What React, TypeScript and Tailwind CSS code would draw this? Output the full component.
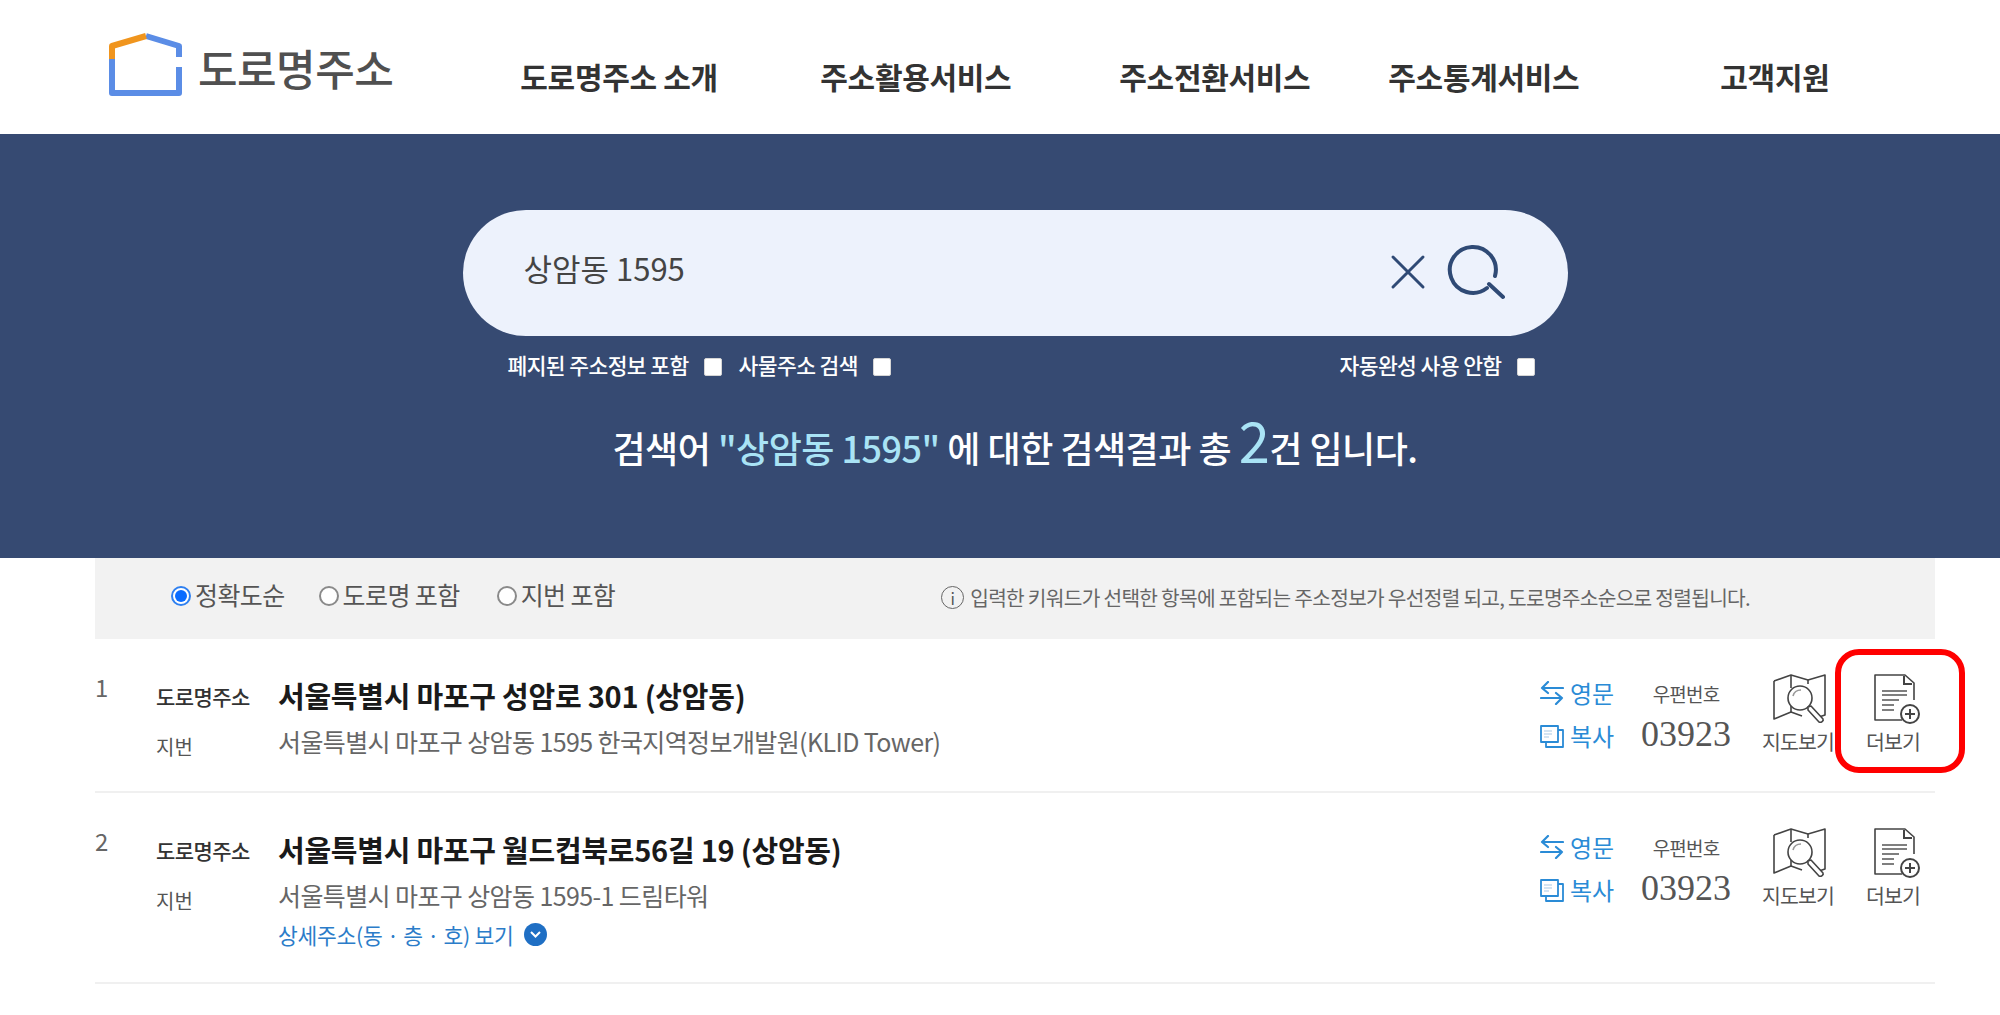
import React from 'react';

function Logo() {
  return (
    <svg width="76" height="64" viewBox="0 0 76 64" fill="none" className="shrink-0">
      <path d="M5 26V60H72V34" stroke="#5b8de6" strokeWidth="6" strokeLinejoin="round" />
      <path d="M39 3L72 13V24" stroke="#5b8de6" strokeWidth="6" strokeLinejoin="round" />
      <path d="M5 26V13L39 3" stroke="#f0951e" strokeWidth="6" strokeLinejoin="round" />
    </svg>
  );
}

function MapIcon() {
  return (
    <svg width="56" height="50" viewBox="0 0 56 50" fill="none" stroke="#444" strokeWidth="1.6" strokeLinejoin="round" className="ml-[3px]">
      <path d="M2 7L19 1L36 6L53 1V41L47 43" />
      <path d="M30 42L19 38L2 45V7" />
      <path d="M19 1V14M19 29V38M36 6V10" />
      <circle cx="28" cy="24" r="12" fill="#fff" />
      <path d="M21 22C22 18 25 16 29 16" stroke="#999" />
      <path d="M36 33L39 32L51 45C52 47 49 49 47 48L36 36Z" fill="#fff" />
    </svg>
  );
}

function DocIcon() {
  return (
    <svg width="48" height="50" viewBox="0 0 48 50" fill="none" stroke="#444" strokeWidth="1.6" className="ml-[10px]">
      <path d="M28 46H1V1H31L40 9V26" strokeLinejoin="round" />
      <path d="M30 2V10H38" strokeWidth="2" />
      <path d="M8 17H33M8 21H33M8 26H25M8 31H20M8 36H20" strokeWidth="1.4" stroke="#555" />
      <circle cx="36" cy="40" r="9" strokeWidth="2" fill="#fff" />
      <path d="M36 35V45M31 40H41" strokeWidth="2" />
    </svg>
  );
}

function SwapIcon() {
  return (
    <svg width="24" height="24" viewBox="0 0 24 24" fill="none" stroke="#2a8bd6" strokeWidth="2.2" strokeLinecap="round" strokeLinejoin="round">
      <path d="M23 7H2M8 1L2 7L8 12" />
      <path d="M1 17H22M16 12L22 17L16 23" />
    </svg>
  );
}

function CopyIcon() {
  return (
    <svg width="24" height="24" viewBox="0 0 24 24" fill="none" stroke="#2a8bd6" strokeWidth="1.8" strokeLinejoin="round">
      <path d="M1 2H18V18H1Z" />
      <path d="M18 6H23V23H6V18" />
      <path d="M4 7H12M4 10H12M4 13H9" stroke="#a9c9e6" strokeWidth="1.2" />
    </svg>
  );
}

function Check({ label, className }: { label: string; className?: string }) {
  return (
    <div className={`flex items-center ${className ?? ''}`}>
      <span className="text-[21.5px] leading-none font-medium text-white tracking-[-0.6px]">{label}</span>
      <span className="ml-[15px] mt-[5px] h-[18px] w-[18px] rounded-[2px] border border-[#d5d5d5] bg-white" />
    </div>
  );
}

function Radio({ label, checked, className }: { label: string; checked?: boolean; className?: string }) {
  return (
    <div className={`flex items-center ${className ?? ''}`}>
      {checked ? (
        <span className="mt-[2px] flex h-[20px] w-[20px] items-center justify-center rounded-full border-2 border-[#2f80f0] bg-white">
          <span className="h-[12px] w-[12px] rounded-full bg-[#0a6cff]" />
        </span>
      ) : (
        <span className="mt-[2px] h-[20px] w-[20px] rounded-full border-2 border-[#8a8a8a] bg-white" />
      )}
      <span className="ml-[4px] text-[25px] leading-none text-[#555] tracking-[-0.6px]">{label}</span>
    </div>
  );
}

function Row({
  no,
  road,
  jibun,
  detail,
  className,
}: {
  no: number;
  road: string;
  jibun: string;
  detail?: boolean;
  className: string;
}) {
  return (
    <div className={`flex border-b-2 border-[#f0f0f0] ${className}`}>
      <div className="w-[61px] pt-[36px] text-[24px] leading-none text-[#666]">{no}</div>
      <div className="w-[122px] shrink-0">
        <div className="mt-[47px] text-[21px] leading-none font-medium text-[#333] tracking-[-0.6px]">도로명주소</div>
        <div className="mt-[30px] text-[20px] leading-none text-[#555]">지번</div>
      </div>
      <div className="flex-1">
        <div className="mt-[42px] text-[29px] leading-none font-bold text-[#1a1a1a] tracking-[-0.25px]">{road}</div>
        <div className="mt-[19px] text-[25px] leading-none text-[#666] tracking-[-0.6px]">{jibun}</div>
        {detail && (
          <div className="mt-[15px] flex items-center text-[21.5px] leading-none text-[#2b7cc9] tracking-[-0.3px]">
            상세주소(동 · 층 · 호) 보기
            <span className="ml-[11px] flex h-[23px] w-[23px] items-center justify-center rounded-full bg-[#1f6fc4]">
              <svg width="13" height="9" viewBox="0 0 13 9" fill="none" stroke="#fff" strokeWidth="2">
                <path d="M2 2L6.5 6.5L11 2" />
              </svg>
            </span>
          </div>
        )}
      </div>
      <div className="flex w-[87px] flex-col pt-[42px] text-[24px] leading-none whitespace-nowrap text-[#2a8bd6]">
        <div className="flex items-center gap-[6px]">
          <SwapIcon />
          영문
        </div>
        <div className="mt-[19px] flex items-center gap-[6px]">
          <CopyIcon />
          복사
        </div>
      </div>
      <div className="flex w-[118px] flex-col items-center pt-[45px]">
        <div className="text-[19px] leading-none text-[#555] tracking-[-0.8px]">우편번호</div>
        <div className="mt-[13px] font-['Liberation_Serif',serif] text-[36px] leading-none text-[#555]">03923</div>
      </div>
      <div className="flex w-[106px] flex-col items-center pt-[35px]">
        <MapIcon />
        <div className="mt-[7px] text-[20.5px] leading-none whitespace-nowrap text-[#555] tracking-[-0.9px]">지도보기</div>
      </div>
      <div className="flex w-[84px] flex-col items-center pt-[35px]">
        <DocIcon />
        <div className="mt-[7px] text-[20.5px] leading-none whitespace-nowrap text-[#555] tracking-[-0.9px]">더보기</div>
      </div>
    </div>
  );
}

export default function App() {
  return (
    <div className="relative h-[1015px] w-[2000px] overflow-hidden bg-white font-['Noto_Sans_CJK_KR','Noto_Sans',sans-serif]">
      {/* header */}
      <div className="flex h-[134px] items-start">
        <div className="ml-[107px] mt-[33px] flex items-center">
          <Logo />
          <span className="ml-[15px] mt-[4px] text-[43px] leading-none font-medium text-[#505050] tracking-[-0.5px]">도로명주소</span>
        </div>
        <nav className="mt-[61px] flex text-[30px] leading-none font-bold text-[#333] tracking-[-0.3px]">
          <span className="ml-[127px] w-[300px]">도로명주소 소개</span>
          <span className="w-[299px]">주소활용서비스</span>
          <span className="w-[269px]">주소전환서비스</span>
          <span className="w-[332px]">주소통계서비스</span>
          <span>고객지원</span>
        </nav>
      </div>

      {/* search */}
      <div className="flex h-[424px] flex-col items-center bg-[#364a72] pl-[30px]">
        <div className="mt-[76px] flex h-[126px] w-[1105px] items-center rounded-[63px] bg-[#edf2fc] pl-[61px] pr-[63px]">
          <span className="mb-[12px] flex-1 text-[31px] leading-none text-[#444]">상암동 1595</span>
          <svg width="36" height="36" viewBox="0 0 36 36" fill="none" stroke="#2f4a75" strokeWidth="3" strokeLinecap="round" className="mr-[21px] mb-[2px]">
            <path d="M3 3L33 33M33 3L3 33" />
          </svg>
          <svg width="58" height="58" viewBox="0 0 58 58" fill="none" stroke="#2f4a75" strokeWidth="4" strokeLinecap="round">
            <path d="M48 32A23 23 0 1 0 40 44" />
            <path d="M42 40L56 53" />
          </svg>
        </div>
        <div className="mt-[17px] flex w-[1105px]">
          <Check label="폐지된 주소정보 포함" className="ml-[45px]" />
          <Check label="사물주소 검색" className="ml-[17px]" />
          <Check label="자동완성 사용 안함" className="ml-auto mr-[33px]" />
        </div>
        <div className="mt-[38px] flex items-baseline text-[36px] leading-none font-medium text-white tracking-[-0.5px]">
          검색어&nbsp;<span className="text-[#a9e3f5]">"상암동 1595"</span>&nbsp;에 대한 검색결과 총&nbsp;
          <span className="text-[56px] leading-[50px] font-normal text-[#a9e3f5]">2</span>건 입니다.
        </div>
      </div>

      {/* results */}
      <div className="mx-[95px] w-[1840px]">
        <div className="flex h-[81px] items-center bg-[#f2f2f2] pb-[8px]">
          <Radio label="정확도순" checked className="ml-[76px]" />
          <Radio label="도로명 포함" className="ml-[34px]" />
          <Radio label="지번 포함" className="ml-[37px]" />
          <div className="ml-[326px] mt-[6px] flex items-center">
            <span className="flex h-[23px] w-[23px] items-center justify-center rounded-full border border-[#666] text-[16px] leading-none text-[#555]">i</span>
            <span className="ml-[6px] text-[20.3px] leading-none text-[#666] tracking-[-0.72px]">
              입력한 키워드가 선택한 항목에 포함되는 주소정보가 우선정렬 되고, 도로명주소순으로 정렬됩니다.
            </span>
          </div>
        </div>
        <Row no={1} road="서울특별시 마포구 성암로 301 (상암동)" jibun="서울특별시 마포구 상암동 1595 한국지역정보개발원(KLID Tower)" className="h-[154px]" />
        <Row no={2} road="서울특별시 마포구 월드컵북로56길 19 (상암동)" jibun="서울특별시 마포구 상암동 1595-1 드림타워" detail className="h-[191px]" />
      </div>

      {/* red highlight */}
      <div className="absolute left-[1835px] top-[649px] h-[124px] w-[130px] rounded-[24px] border-[6px] border-[#ff0000]" />
    </div>
  );
}
